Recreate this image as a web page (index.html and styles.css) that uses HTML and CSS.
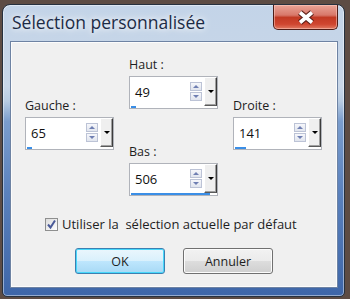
FILE: index.html
```html
<!DOCTYPE html>
<html lang="fr">
<head>
    <meta charset="UTF-8">
    <meta name="viewport" content="width=device-width, initial-scale=1.0">
    <title>Sélection personnalisée</title>
    <link rel="stylesheet" href="styles.css">
</head>
<body>
    <div class="fenetre">
        <div class="barre-titre">
            <span class="titre">Sélection personnalisée</span>
            <button class="fermer" type="button">
                <svg width="20" height="15" viewBox="0 0 20 15">
                    <path d="M4 2.5 L16 12.5 M16 2.5 L4 12.5" stroke="#5a1d16" stroke-width="6" fill="none"/>
                    <path d="M4 2.5 L16 12.5 M16 2.5 L4 12.5" stroke="#fff" stroke-width="3.6" fill="none"/>
                </svg>
            </button>
        </div>

        <div class="client">
            <div class="champs">
                <div class="colonne cote">
                    <div class="champ">
                        <div class="etiquette">Gauche :</div>
                        <div class="spin">
                            <span class="valeur">65</span>
                            <span class="fleches"><span class="monter"></span><span class="descendre"></span></span>
                            <span class="deroule"></span>
                            <span class="jauge" style="width: 5px"></span>
                        </div>
                    </div>
                </div>

                <div class="colonne milieu">
                    <div class="champ">
                        <div class="etiquette">Haut :</div>
                        <div class="spin">
                            <span class="valeur">49</span>
                            <span class="fleches"><span class="monter"></span><span class="descendre"></span></span>
                            <span class="deroule"></span>
                            <span class="jauge" style="width: 5px"></span>
                        </div>
                    </div>
                    <div class="champ">
                        <div class="etiquette">Bas :</div>
                        <div class="spin">
                            <span class="valeur">506</span>
                            <span class="fleches"><span class="monter"></span><span class="descendre"></span></span>
                            <span class="deroule"></span>
                            <span class="jauge" style="width: 79px"></span>
                        </div>
                    </div>
                </div>

                <div class="colonne cote">
                    <div class="champ">
                        <div class="etiquette">Droite :</div>
                        <div class="spin">
                            <span class="valeur">141</span>
                            <span class="fleches"><span class="monter"></span><span class="descendre"></span></span>
                            <span class="deroule"></span>
                            <span class="jauge" style="width: 11px"></span>
                        </div>
                    </div>
                </div>
            </div>

            <label class="case">
                <span class="coche">
                    <svg width="11" height="11" viewBox="0 0 11 11">
                        <path d="M2 5.5 L4.5 8.5 L9 1.5" stroke="#4a5a98" stroke-width="2" fill="none"/>
                    </svg>
                </span>
                <span>Utiliser la&nbsp; sélection actuelle par défaut</span>
            </label>

            <div class="boutons">
                <button class="btn defaut" type="button">OK</button>
                <button class="btn" type="button">Annuler</button>
            </div>
        </div>
    </div>
</body>
</html>
```

FILE: styles.css
```css
* {
    font-family: "Open Sans", "Noto Sans", sans-serif;
}
body {
    margin: 0;
    width: 350px;
    height: 299px;
    overflow: hidden;
    background: #5d4c44;
}
.fenetre {
    margin: 4px 0 0 2px;
    width: 343px;
    height: 293px;
    box-sizing: border-box;
    border: 1px solid #26313f;
    border-radius: 8px 8px 5px 5px;
    background: linear-gradient(to bottom, #c3d4e8 0, #c9d7e8 28%, #b9cce2 33%, #7a9dcd 40%, #5a81bd 65%, #3e66a8 100%);
    box-shadow: inset 0 0 0 1px rgba(255, 255, 255, .45);
    display: flex;
    flex-direction: column;
}
.barre-titre {
    height: 36px;
    display: flex;
    padding-left: 9px;
}
.titre {
    padding-top: 7px;
    font-size: 17.5px;
    line-height: 20px;
    color: #1c2b45;
    text-shadow: 0 0 10px #fff, 0 0 5px rgba(255, 255, 255, .8);
}
.fermer {
    margin-left: auto;
    margin-right: 6px;
    width: 65px;
    height: 25px;
    padding: 0;
    border: 1px solid #4f1d17;
    border-top: none;
    border-radius: 0 0 5px 5px;
    background: linear-gradient(to bottom, #e9a497 0, #d8786a 42%, #c23a24 52%, #cf4630 80%, #e07a62 100%);
    box-shadow: inset 0 0 0 1px rgba(255, 210, 200, .5);
    display: flex;
    align-items: center;
    justify-content: center;
}
.client {
    margin: 0 6px 0 7px;
    height: 247px;
    box-sizing: border-box;
    border: 1px solid #6e83a3;
    background: #f0f0f0;
    box-shadow: inset 0 0 0 1px #fcfcfc;
}
.champs {
    display: flex;
    align-items: flex-start;
    column-gap: 15px;
    padding: 15px 0 0 14px;
}
.cote {
    padding-top: 41px;
}
.milieu {
    display: flex;
    flex-direction: column;
    gap: 35px;
}
.etiquette {
    font-size: 12.5px;
    line-height: 16px;
    margin-bottom: 3px;
    color: #1e1e1e;
}
.spin {
    position: relative;
    width: 89px;
    height: 33px;
    box-sizing: border-box;
    border: 1px solid #b0b3ba;
    background: #fff;
    display: flex;
    align-items: center;
}
.valeur {
    flex: 1;
    padding: 0 0 2px 5px;
    font-size: 13px;
    color: #111;
}
.fleches {
    display: flex;
    flex-direction: column;
    gap: 1px;
    margin-right: 2px;
    margin-bottom: 2px;
}
.fleches span {
    width: 12px;
    height: 9px;
    box-sizing: border-box;
    border: 1px solid #bcc3d6;
    background: linear-gradient(to bottom, #f6f7fb, #e1e5ee);
    display: flex;
    align-items: center;
    justify-content: center;
}
.monter::after {
    content: "";
    border-left: 3px solid transparent;
    border-right: 3px solid transparent;
    border-bottom: 3px solid #6f7fb2;
}
.descendre::after {
    content: "";
    border-left: 3px solid transparent;
    border-right: 3px solid transparent;
    border-top: 3px solid #6f7fb2;
}
.deroule {
    align-self: flex-start;
    width: 13px;
    height: 29px;
    box-sizing: border-box;
    background: #efefef;
    border-left: 1px solid #fff;
    border-top: 1px solid #fff;
    border-right: 1px solid #3c3c3c;
    border-bottom: 1px solid #5a5a5a;
    box-shadow: inset -1px -1px 0 #a0a0a0;
    display: flex;
    align-items: center;
    justify-content: center;
}
.deroule::after {
    content: "";
    border-left: 3px solid transparent;
    border-right: 3px solid transparent;
    border-top: 3px solid #000;
}
.jauge {
    position: absolute;
    left: 1px;
    bottom: 0;
    height: 2px;
    background: #3a8ee6;
}
.case {
    display: flex;
    align-items: center;
    gap: 4px;
    height: 16px;
    margin-top: 20px;
    padding-left: 34px;
    font-size: 13px;
    color: #1e1e1e;
}
.coche {
    width: 13px;
    height: 13px;
    box-sizing: border-box;
    border: 1px solid #8e8f8f;
    background: linear-gradient(135deg, #dcdcdc, #ffffff);
    display: flex;
    align-items: center;
    justify-content: center;
}
.boutons {
    display: flex;
    gap: 18px;
    margin-top: 16px;
    padding-left: 64px;
}
.btn {
    width: 90px;
    height: 26px;
    padding: 0;
    border: 1px solid #707070;
    border-radius: 3px;
    background: linear-gradient(to bottom, #f2f2f2 0, #ebebeb 50%, #dddddd 51%, #cfcfcf 100%);
    box-shadow: inset 0 0 0 1px #fcfcfc;
    font-size: 12.5px;
    color: #1e1e1e;
}
.btn.defaut {
    border-color: #3c7fb1;
    background: linear-gradient(to bottom, #eaf6fd 0, #d9f0fc 50%, #bee6fd 51%, #a7d9f5 100%);
    box-shadow: inset 0 0 0 1px #48d8fb;
}
```
